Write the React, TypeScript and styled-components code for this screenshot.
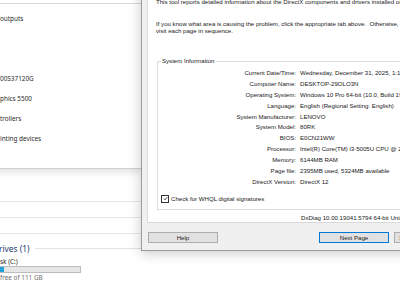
import * as React from 'react'
import styled, { createGlobalStyle } from 'styled-components'

interface IRow {
	label: string
	value: string
}

const systemRows: IRow[] = [
	{ label: 'Current Date/Time:', value: 'Wednesday, December 31, 2025, 1:15:42 PM' },
	{ label: 'Computer Name:', value: 'DESKTOP-29OLO3N' },
	{ label: 'Operating System:', value: 'Windows 10 Pro 64-bit (10.0, Build 19045)' },
	{ label: 'Language:', value: 'English (Regional Setting: English)' },
	{ label: 'System Manufacturer:', value: 'LENOVO' },
	{ label: 'System Model:', value: '80RK' },
	{ label: 'BIOS:', value: 'E0CN21WW' },
	{ label: 'Processor:', value: 'Intel(R) Core(TM) i3-5005U CPU @ 2.00GHz (4 CPUs), ~2.0GHz' },
	{ label: 'Memory:', value: '6144MB RAM' },
	{ label: 'Page file:', value: '2395MB used, 5324MB available' },
	{ label: 'DirectX Version:', value: 'DirectX 12' },
]

// only the right ends of the tree items peek out from under the dialog
const deviceItems = ['outputs', '', '', '00S37120G', 'phics 5500', 'trollers', 'inting devices']

export default function App() {
	return (
		<Desktop>
			<GlobalStyle />
			<ExplorerPane>
				<FolderRow />
				<FolderRow />
				<FolderRow />
				<GroupHeader>
					<GroupTitle>rives (1)</GroupTitle>
					<GroupRule />
				</GroupHeader>
				<DiskName>sk (C:)</DiskName>
				<UsageBar>
					<UsageFill style={{ width: `${(4 / 81) * 100}%` }} />
				</UsageBar>
				<DiskFree>free of 111 GB</DiskFree>
			</ExplorerPane>

			<DeviceWindow>
				<DeviceList>
					{deviceItems.map((item, index) => (
						<DeviceItem key={index}>{item}</DeviceItem>
					))}
				</DeviceList>
			</DeviceWindow>

			<DxWindow>
				<TabPanel>
					<Intro>This tool reports detailed information about the DirectX components and drivers installed on your system.</Intro>
					<Para>
						<Line>
							If you know what area is causing the problem, click the appropriate tab above.&nbsp; Otherwise, use the "Next Page" button below to
						</Line>
						<Line>visit each page in sequence.</Line>
					</Para>
					<GroupBox>
						<Legend>System Information</Legend>
						<InfoGrid>
							{systemRows.map((row) => (
								<React.Fragment key={row.label}>
									<InfoLabel>{row.label}</InfoLabel>
									<InfoValue>{row.value}</InfoValue>
								</React.Fragment>
							))}
						</InfoGrid>
						<CheckRow>
							<CheckBox>
								<svg width="5" height="5" viewBox="0 0 10 10">
									<path d="M1.5 5.2 L4 7.8 L8.8 2" fill="none" stroke="#222" strokeWidth="1.6" />
								</svg>
							</CheckBox>
							<span>Check for WHQL digital signatures</span>
						</CheckRow>
					</GroupBox>
					<VersionLine>DxDiag 10.00.19041.5794 64-bit Unicode&nbsp; Copyright © Microsoft. All rights reserved.</VersionLine>
				</TabPanel>
				<ButtonBar>
					<DlgButton>Help</DlgButton>
					<DlgButton isDefault gap={101}>
						Next Page
					</DlgButton>
					<DlgButton gap={5}>Save All Information...</DlgButton>
				</ButtonBar>
			</DxWindow>
		</Desktop>
	)
}

interface IButton {
	isDefault?: boolean
	gap?: number
}

const GlobalStyle = createGlobalStyle`
	html, body {
		margin: 0;
		padding: 0;
		background: #ffffff;
	}
	body {
		width: 400px;
		height: 300px;
		overflow: hidden;
	}
`

const Desktop = styled.div`
	position: relative;
	width: 400px;
	height: 300px;
	overflow: hidden;
	background: #ffffff;
	font-family: 'Liberation Sans', Arial, sans-serif;
	color: #1c1c1c;
`

/* This PC window, the bottom layer */
const ExplorerPane = styled.div`
	display: flex;
	flex-direction: column;
	width: 142px;
	padding-top: 201px;
	font-family: 'Noto Sans', 'Open Sans', sans-serif;
	font-size: 6.4px;
	color: #2a2a2a;
`

const FolderRow = styled.div`
	height: 15px;
	border-top: 1px solid #e6e6e6;
`

const GroupHeader = styled.div`
	display: flex;
	align-items: center;
	gap: 5px;
	height: 9px;
	margin-top: -5px;
`

const GroupTitle = styled.span`
	font-size: 8.4px;
	color: #1e3a6e;
	white-space: nowrap;
	margin-left: -1px;
`

const GroupRule = styled.div`
	flex: 1;
	height: 1px;
	background: #e2e2e2;
`

const DiskName = styled.div`
	margin-top: 5px;
	line-height: 8px;
	white-space: nowrap;
`

const UsageBar = styled.div`
	width: 80px;
	height: 5px;
	margin-top: 0;
	margin-left: -1px;
	border: 1px solid #bcbcbc;
	background: #e6e6e6;
`

const UsageFill = styled.div`
	height: 100%;
	background: #26a0da;
`

const DiskFree = styled.div`
	margin-top: 1px;
	line-height: 8px;
	white-space: nowrap;
	color: #6d6d6d;
`

/* the device window that lies over the This PC window */
const DeviceWindow = styled.div`
	position: absolute;
	left: -60px;
	top: -30px;
	width: 202px;
	height: 198px;
	background: #ffffff;
	border-bottom: 1px solid #cfcfcf;
	box-shadow: 0 3px 8px rgba(0, 0, 0, 0.12);
	font-family: 'Noto Sans', 'Open Sans', sans-serif;
	font-size: 6.4px;
	color: #2a2a2a;
`

const DeviceList = styled.div`
	display: flex;
	flex-direction: column;
	margin-top: 33px;
	padding-top: 10px;
	padding-left: 60px;
	border-top: 1px solid #dadada;
`

const DeviceItem = styled.div`
	height: 20px;
	line-height: 10px;
	white-space: nowrap;
`

/* DxDiag dialog, on top */
const DxWindow = styled.div`
	position: absolute;
	left: 141px;
	top: -20px;
	width: 290px;
	display: flex;
	flex-direction: column;
	padding: 0 0 7px 5px;
	background: #f0f0f0;
	border: 1px solid #9c9c9c;
	box-shadow: 0 2px 12px rgba(0, 0, 0, 0.22);
	font-size: 6.1px;
	color: #1a1a1a;
`

const TabPanel = styled.div`
	display: flex;
	flex-direction: column;
	flex: none;
	height: 242px;
	box-sizing: border-box;
	padding: 17px 0 0 8px;
	background: #ffffff;
	border: 1px solid #d9d9d9;
	border-top: none;
	white-space: nowrap;
`

const Line = styled.div`
	line-height: 7px;
`

const Intro = styled(Line)``

const Para = styled.div`
	margin-top: 15px;
`

const GroupBox = styled.div`
	position: relative;
	flex: none;
	margin: 27px 0 0 1px;
	height: 149px;
	box-sizing: border-box;
	border: 1px solid #dcdcdc;
	padding-top: 5px;
`

const Legend = styled.span`
	position: absolute;
	left: 3px;
	top: -5px;
	padding: 0 1px;
	background: #ffffff;
	line-height: 7px;
`

const InfoGrid = styled.div`
	display: grid;
	grid-template-columns: 138px 1fr;
	column-gap: 4px;
	grid-auto-rows: 10.9px;
	align-items: center;
`

const InfoLabel = styled.span`
	text-align: right;
`

const InfoValue = styled.span``

const CheckRow = styled.div`
	display: flex;
	align-items: center;
	gap: 2px;
	margin: 8px 0 0 3px;
`

const CheckBox = styled.span`
	display: flex;
	align-items: center;
	justify-content: center;
	width: 6px;
	height: 6px;
	border: 1px solid #333333;
	background: #ffffff;
`

const VersionLine = styled.div`
	margin-top: 4px;
	padding-left: 145px;
	line-height: 7px;
`

const ButtonBar = styled.div`
	display: flex;
	margin-top: 9px;
	padding-left: 1px;
`

const DlgButton = styled.div<IButton>`
	display: flex;
	align-items: center;
	justify-content: center;
	flex: none;
	width: 70px;
	height: 11px;
	box-sizing: border-box;
	margin-left: ${(props) => (props.gap ? props.gap : 0)}px;
	background: #e1e1e1;
	border: 1px solid ${(props) => (props.isDefault ? '#0078d7' : '#adadad')};
	white-space: nowrap;
	overflow: hidden;
`
